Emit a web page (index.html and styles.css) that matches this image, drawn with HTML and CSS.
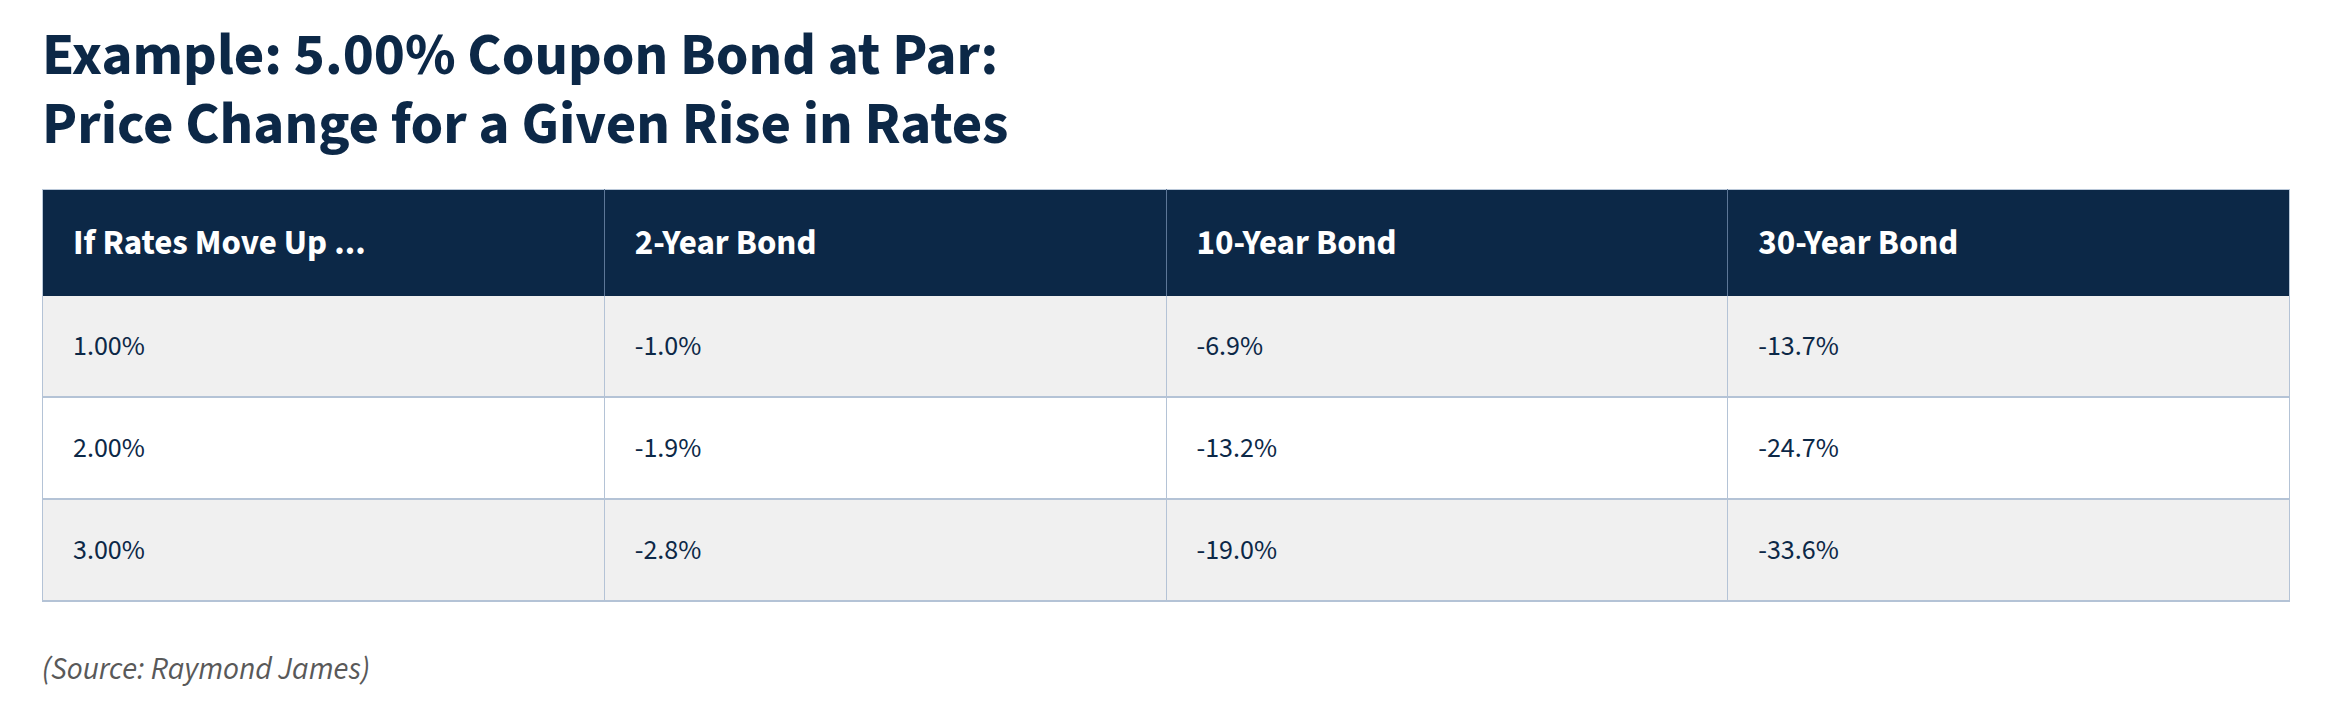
FILE: index.html
```html
<!DOCTYPE html>
<html lang="en">
<head>
<meta charset="utf-8">
<title>Example: 5.00% Coupon Bond at Par</title>
<link rel="stylesheet" href="styles.css">
</head>
<body>
<main class="page">
  <h1 class="title">
    <span class="title-line">Example: 5.00% Coupon Bond at Par:</span>
    <span class="title-line">Price Change for a Given Rise in Rates</span>
  </h1>
  <table class="bond-table">
    <thead>
      <tr>
        <th>If Rates Move Up ...</th>
        <th>2-Year Bond</th>
        <th>10-Year Bond</th>
        <th>30-Year Bond</th>
      </tr>
    </thead>
    <tbody>
      <tr>
        <td>1.00%</td>
        <td>-1.0%</td>
        <td>-6.9%</td>
        <td>-13.7%</td>
      </tr>
      <tr>
        <td>2.00%</td>
        <td>-1.9%</td>
        <td>-13.2%</td>
        <td>-24.7%</td>
      </tr>
      <tr>
        <td>3.00%</td>
        <td>-2.8%</td>
        <td>-19.0%</td>
        <td>-33.6%</td>
      </tr>
    </tbody>
  </table>
  <p class="source">(Source: Raymond James)</p>
</main>
</body>
</html>
```
FILE: styles.css
```css
html, body {
  margin: 0;
  padding: 0;
  background: #ffffff;
}

.page {
  padding: 22px 40px 0 42px;
  font-family: "Source Sans 3", "Source Sans Pro", "Lato", sans-serif;
  color: #0c2847;
}

.title {
  margin: 0 0 29px 0;
  font-size: 59px;
  font-weight: 700;
  line-height: 69px;
  color: #0c2847;
}

.title-line {
  display: block;
  height: 69px;
  white-space: nowrap;
}

.bond-table {
  width: 2248px;
  border-collapse: collapse;
  table-layout: fixed;
}

.bond-table th,
.bond-table td {
  text-align: left;
  vertical-align: middle;
  padding: 0 30px;
}

.bond-table th {
  height: 106px;
  background: #0c2847;
  color: #ffffff;
  font-size: 35px;
  font-weight: 700;
  border-left: 1px solid #5d7797;
  border-right: 1px solid #5d7797;
  border-top: 1px solid #b9c7d8;
}

.bond-table th:first-child {
  border-left-color: #b9c7d8;
}

.bond-table th:last-child {
  border-right-color: #b9c7d8;
}

.bond-table td {
  height: 100px;
  font-size: 28px;
  font-weight: 400;
  color: #0c2847;
  border-left: 1px solid #b4c3d6;
  border-right: 1px solid #b4c3d6;
  border-bottom: 2px solid #b4c3d6;
}

.bond-table tbody tr:nth-child(odd) {
  background: #f0f0f0;
}

.bond-table tbody tr:nth-child(even) {
  background: #ffffff;
}

.source {
  margin: 47px 0 0 0;
  font-size: 31px;
  font-style: italic;
  line-height: 40px;
  color: #595959;
}
```
